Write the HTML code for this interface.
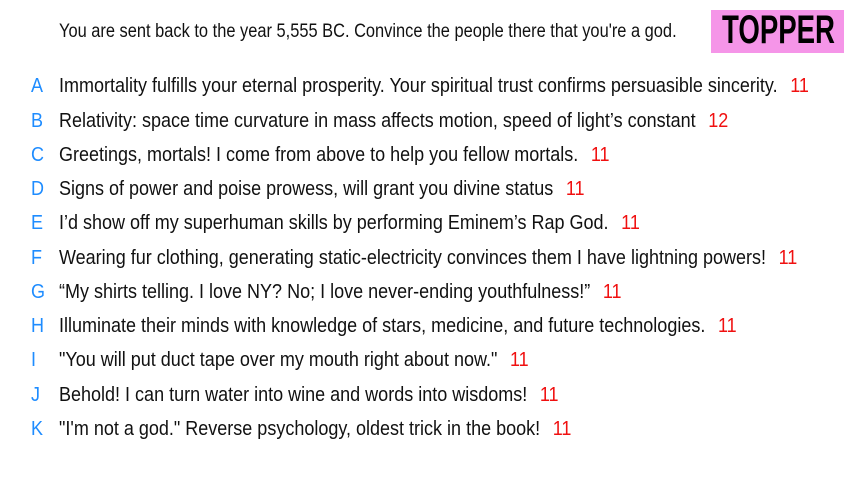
<!DOCTYPE html>
<html><head><style>
body{margin:0;width:853px;height:480px;background:#fff;position:relative;overflow:hidden;font-family:"Liberation Sans",sans-serif;color:#111;}
.q{position:absolute;left:59px;top:21px;font-size:19px;white-space:nowrap;transform:scaleX(0.864);transform-origin:0 0;}
.top{position:absolute;left:711px;top:10px;width:133px;height:43px;background:#f595e8;color:#000;overflow:hidden;}
.top span{position:absolute;left:11px;top:0;line-height:40px;font-size:40px;font-weight:bold;transform:scaleX(0.69);transform-origin:0 0;white-space:nowrap;}
.r{position:absolute;left:0;font-size:20px;white-space:nowrap;height:24px;line-height:24px;width:900px;}
.r b{position:absolute;left:31px;color:#1e8cff;font-weight:normal;transform:scaleX(0.9);transform-origin:0 0;}
.r span{position:absolute;left:59px;transform:scaleX(0.9);transform-origin:0 0;}
.r i{font-style:normal;color:#f01010;margin-left:14px;}
</style></head><body>
<div class="q">You are sent back to the year 5,555 BC. Convince the people there that you're a god.</div>
<div class="top"><span>TOPPER</span></div>
<div class="r" style="top:74px"><b>A</b><span>Immortality fulfills your eternal prosperity. Your spiritual trust confirms persuasible sincerity.<i>11</i></span></div>
<div class="r" style="top:109px"><b>B</b><span>Relativity: space time curvature in mass affects motion, speed of light’s constant<i>12</i></span></div>
<div class="r" style="top:143px"><b>C</b><span>Greetings, mortals! I come from above to help you fellow mortals.<i>11</i></span></div>
<div class="r" style="top:177px"><b>D</b><span>Signs of power and poise prowess, will grant you divine status<i>11</i></span></div>
<div class="r" style="top:211px"><b>E</b><span>I’d show off my superhuman skills by performing Eminem’s Rap God.<i>11</i></span></div>
<div class="r" style="top:246px"><b>F</b><span>Wearing fur clothing, generating static-electricity convinces them I have lightning powers!<i>11</i></span></div>
<div class="r" style="top:280px"><b>G</b><span>“My shirts telling. I love NY? No; I love never-ending youthfulness!”<i>11</i></span></div>
<div class="r" style="top:314px"><b>H</b><span>Illuminate their minds with knowledge of stars, medicine, and future technologies.<i>11</i></span></div>
<div class="r" style="top:348px"><b>I</b><span>"You will put duct tape over my mouth right about now."<i>11</i></span></div>
<div class="r" style="top:383px"><b>J</b><span>Behold! I can turn water into wine and words into wisdoms!<i>11</i></span></div>
<div class="r" style="top:417px"><b>K</b><span>"I'm not a god." Reverse psychology, oldest trick in the book!<i>11</i></span></div>
</body></html>
